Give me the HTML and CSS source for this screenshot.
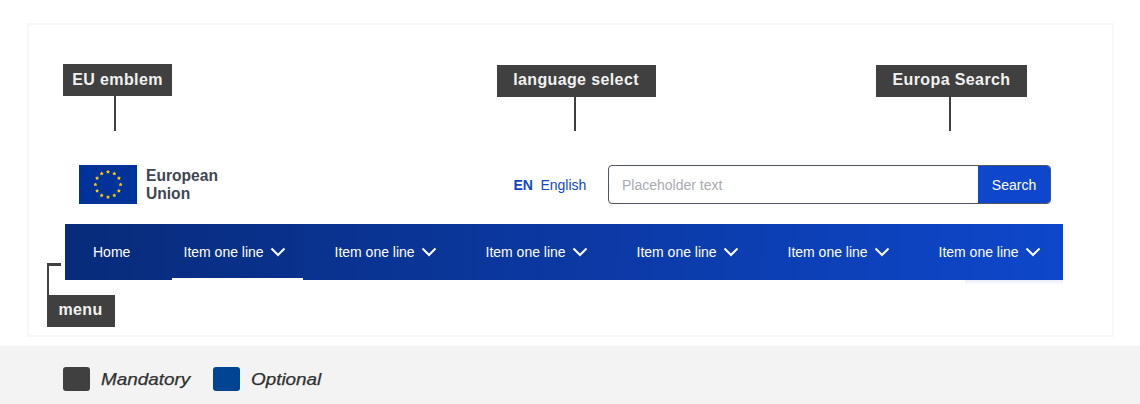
FILE: index.html
```
<!DOCTYPE html>
<html lang="en">
<head>
<meta charset="utf-8">
<title>European Union header</title>
<link rel="stylesheet" href="styles.css">
</head>
<body>
<main class="frame">
  <div class="callouts">
    <div class="callout callout-emblem"><span class="tag">EU emblem</span><i class="stem"></i></div>
    <div class="callout callout-language"><span class="tag">language select</span><i class="stem"></i></div>
    <div class="callout callout-search"><span class="tag">Europa Search</span><i class="stem"></i></div>
  </div>
  <header class="site-header">
    <svg class="flag" viewBox="0 0 58 39">
      <defs><path id="star" fill="#fc0" d="M0-2.1 .65-.85 2-.7 1.05.3 1.3 1.7 0 1.1-1.3 1.7-1.05.3-2-.7-.65-.85Z"/></defs>
      <rect width="58" height="39" fill="#039"/>
      <g transform="translate(29 19.5)">
        <use href="#star" y="-12.6"/><use href="#star" x="6.3" y="-10.9"/><use href="#star" x="10.9" y="-6.3"/><use href="#star" x="12.6"/>
        <use href="#star" x="10.9" y="6.3"/><use href="#star" x="6.3" y="10.9"/><use href="#star" y="12.6"/><use href="#star" x="-6.3" y="10.9"/>
        <use href="#star" x="-10.9" y="6.3"/><use href="#star" x="-12.6"/><use href="#star" x="-10.9" y="-6.3"/><use href="#star" x="-6.3" y="-10.9"/>
      </g>
    </svg>
    <div class="wordmark">European<br>Union</div>
    <a class="language"><b>EN</b><span>English</span></a>
    <div class="search"><span class="field">Placeholder text</span><span class="button">Search</span></div>
  </header>
  <nav class="menu">
    <a class="home">Home</a>
    <a class="item active">Item one line<svg class="chevron" viewBox="0 0 16 10"><path d="M1.5 1.5 8 8 14.5 1.5"/></svg></a>
    <a class="item">Item one line<svg class="chevron" viewBox="0 0 16 10"><path d="M1.5 1.5 8 8 14.5 1.5"/></svg></a>
    <a class="item">Item one line<svg class="chevron" viewBox="0 0 16 10"><path d="M1.5 1.5 8 8 14.5 1.5"/></svg></a>
    <a class="item">Item one line<svg class="chevron" viewBox="0 0 16 10"><path d="M1.5 1.5 8 8 14.5 1.5"/></svg></a>
    <a class="item">Item one line<svg class="chevron" viewBox="0 0 16 10"><path d="M1.5 1.5 8 8 14.5 1.5"/></svg></a>
    <a class="item">Item one line<svg class="chevron" viewBox="0 0 16 10"><path d="M1.5 1.5 8 8 14.5 1.5"/></svg></a>
  </nav>
  <div class="menu-callout"><i class="elbow"></i><span class="tag">menu</span></div>
</main>
<footer class="legend">
  <i class="swatch"></i><span class="mandatory">Mandatory</span>
  <i class="swatch optional-swatch"></i><span class="optional">Optional</span>
</footer>
</body>
</html>
```
FILE: styles.css
```
* { box-sizing: border-box; }
body {
  margin: 0;
  height: 404px;
  padding-top: 23px;
  display: flex;
  flex-direction: column;
  overflow: hidden;
  background: #fff;
  font-family: "Liberation Sans", Arial, sans-serif;
  font-size: 14px;
}
.frame {
  position: relative;
  width: 1087px;
  height: 314px;
  margin-left: 27px;
  border: 2px solid #f7f7f7;
  padding: 39px 49px 0 34px;
}
.callouts { display: flex; height: 67px; }
.callout { display: flex; flex-direction: column; }
.callout-emblem { width: 109px; }
.callout-language { width: 159px; margin-left: 325px; padding-top: 1px; }
.callout-search { width: 151px; margin-left: 220px; padding-top: 1px; }
.tag {
  display: block;
  height: 32px;
  background: #404040;
  color: #f1f1f1;
  font-weight: bold;
  font-size: 16px;
  line-height: 30px;
  letter-spacing: .38px;
  text-align: center;
  white-space: nowrap;
}
.callout-emblem .tag { line-height: 32px; }
.callout-language .tag { padding-right: 1px; }
.menu-callout .tag { padding-right: 1px; }
.stem { width: 2px; flex: 1; margin-left: 51px; background: #404040; }
.callout-language .stem { margin-left: 77px; }
.callout-search .stem { margin-left: 73px; }
.site-header { display: flex; height: 39px; margin: 34px 12px 0 16px; }
.flag { width: 58px; height: 39px; }
.wordmark {
  width: 368px;
  padding: 2px 0 0 9px;
  color: #404654;
  font-size: 15.6px;
  font-weight: bold;
  line-height: 18px;
}
.language {
  display: flex;
  gap: 7.5px;
  width: 103px;
  padding-left: 8.5px;
  color: #0e47cb;
  line-height: 40px;
}
.search {
  display: flex;
  width: 443px;
  height: 39px;
  border: 1px solid #515560;
  border-radius: 4px;
  overflow: hidden;
  line-height: 38px;
}
.field { width: 369px; padding-left: 13px; color: #a9abb0; }
.button { flex: 1; background: #0e47cb; color: #fff; text-align: center; }
.menu {
  display: flex;
  align-items: stretch;
  width: 998px;
  height: 56px;
  margin: 20px 0 0 2px;
  background: linear-gradient(90deg, #082b7a, #0e47cb);
  color: #fff;
  line-height: 16px;
}
.home { display: flex; align-items: center; width: 107px; padding-left: 28px; }
.item {
  display: flex;
  align-items: center;
  gap: 6.5px;
  width: 131px;
  margin-right: 20px;
  padding-left: 11.5px;
  white-space: nowrap;
}
.item:last-child { margin-right: 0; }
.active { background: linear-gradient(#fff, #fff) bottom / 100% 2px no-repeat; }
.chevron {
  width: 16px;
  height: 10px;
  fill: none;
  stroke: #fff;
  stroke-width: 2;
}
.menu::after {
  content: "";
  position: absolute;
  left: 936px;
  top: 255px;
  width: 98px;
  height: 5px;
  background: linear-gradient(#e9edfa, #fff);
}
.menu-callout {
  position: absolute;
  left: 18px;
  top: 238px;
  width: 68px;
}
.elbow {
  display: block;
  width: 14px;
  height: 32px;
  border-left: 2px solid #404040;
  background: linear-gradient(#404040 3px, transparent 3px);
}
.legend {
  display: flex;
  height: 58px;
  margin-top: 9px;
  padding: 21px 0 0 63px;
  background: #f3f3f3;
  color: #303030;
  font-size: 17px;
  font-style: italic;
  line-height: 25px;
}
.swatch { width: 27px; height: 24px; border-radius: 3px; background: #404040; }
.optional-swatch { background: #004494; }
.mandatory,
.optional {
  margin-left: 11px;
  transform: scaleX(1.11);
  transform-origin: left;
  -webkit-text-stroke: .25px #303030;
}
.mandatory { width: 112px; }
```
